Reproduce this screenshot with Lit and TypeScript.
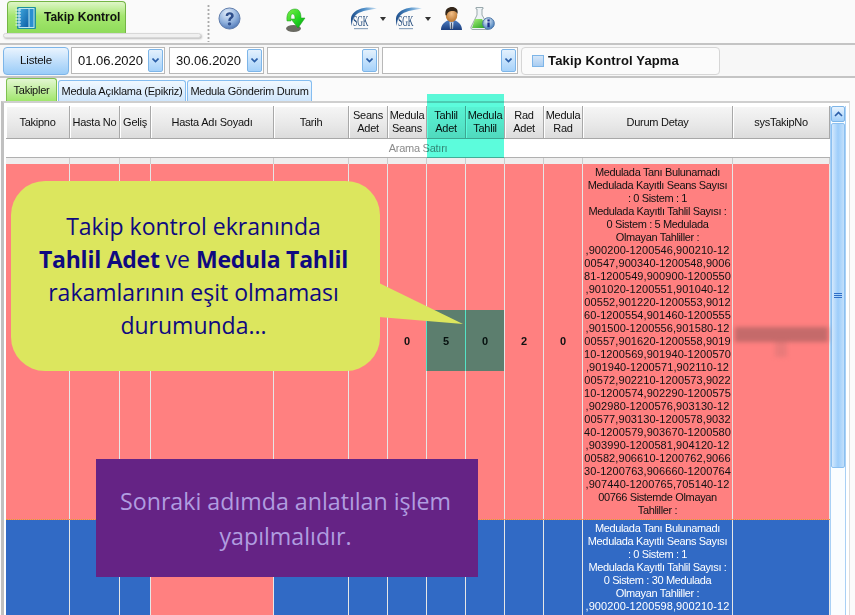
import { LitElement, html, css, svg } from "lit";
import { customElement } from "lit/decorators.js";

const HEAD = [["Takipno"], ["Hasta No"], ["Geliş"], ["Hasta Adı Soyadı"], ["Tarih"], ["Seans", "Adet"], ["Medula", "Seans"], ["Tahlil", "Adet"], ["Medula", "Tahlil"], ["Rad", "Adet"], ["Medula", "Rad"], ["Durum Detay"], ["sysTakipNo"]];
const D1 = ["Medulada Tanı Bulunamadı", "Medulada Kayıtlı Seans Sayısı", ": 0 Sistem : 1", "Medulada Kayıtlı Tahlil Sayısı :", "0 Sistem : 5 Medulada", "Olmayan Tahliller :", ",900200-1200546,900210-12", "00547,900340-1200548,9006", "81-1200549,900900-1200550", ",901020-1200551,901040-12", "00552,901220-1200553,9012", "60-1200554,901460-1200555", ",901500-1200556,901580-12", "00557,901620-1200558,9019", "10-1200569,901940-1200570", ",901940-1200571,902110-12", "00572,902210-1200573,9022", "10-1200574,902290-1200575", ",902980-1200576,903130-12", "00577,903130-1200578,9032", "40-1200579,903670-1200580", ",903990-1200581,904120-12", "00582,906610-1200762,9066", "30-1200763,906660-1200764", ",907440-1200765,705140-12", "00766 Sistemde Olmayan", "Tahliller :"];
const D2 = ["Medulada Tanı Bulunamadı", "Medulada Kayıtlı Seans Sayısı", ": 0 Sistem : 1", "Medulada Kayıtlı Tahlil Sayısı :", "0 Sistem : 30 Medulada", "Olmayan Tahliller :", ",900200-1200598,900210-12"];
const isNums = (l: string) => /^[\d,-]+$/.test(l);

const sgk = () => html`<svg class="ic" width="27" height="23" viewBox="0 0 27 23">
  <defs><linearGradient id="sw" x1="0" y1="0" x2="1" y2="0"><stop offset="0" stop-color="#1f4f8c"/><stop offset=".5" stop-color="#4f8fc8"/><stop offset="1" stop-color="#cfe4f5"/></linearGradient></defs>
  <path d="M27 1.500C18 -.5 6 .5 1.500 9C.5 12 1 16 2 19C2 14 3 10 7 7C12 3.500 20 3 27 1.500Z" fill="url(#sw)"/>
  <text transform="translate(3 19) scale(.56 1)" font-family="Liberation Serif, serif" font-size="14" fill="#1d4679">SGK</text>
  <rect x="4" y="21" width="14" height="1.200" fill="#8fa6bf"/></svg>`;

const help = svg`<defs><radialGradient id="hg" cx="40%" cy="25%" r="85%"><stop offset="0" stop-color="#e4eefa"/><stop offset=".55" stop-color="#8fb0dc"/><stop offset="1" stop-color="#3f69ad"/></radialGradient></defs>
  <circle cx="12" cy="12" r="11" fill="url(#hg)" stroke="#5c79a8"/>
  <path d="M8 9.5C8 6.5 10 5.5 12.2 5.5C14.8 5.5 16.4 7 16.4 9C16.4 11.8 13.2 11.8 13.2 14.5H10.8C10.8 10.8 13.6 10.8 13.6 9.2C13.6 8.2 13 7.7 12.1 7.7C11.1 7.7 10.6 8.4 10.6 9.5Z" fill="#2f4f8c"/>
  <circle cx="12" cy="17.6" r="1.8" fill="#2f4f8c"/>`;

const arrow = svg`<defs><linearGradient id="ag" x1="0" y1="0" x2="1" y2="1"><stop offset="0" stop-color="#7cf04a"/><stop offset=".6" stop-color="#1fd21f"/><stop offset="1" stop-color="#0b9a12"/></linearGradient></defs>
  <ellipse cx="8.500" cy="20.500" rx="7.500" ry="3.500" fill="#6a6a62"/>
  <path d="M2 13C1 5 5 1 10 1C14 1 16 4 16 10H20L13 20 6 11H10C10 7 9 6 7.500 6C6 6 5.500 8 6 13Z" fill="url(#ag)" stroke="#1c9a1c" stroke-width=".5"/>`;

const person = svg`<defs><linearGradient id="pb" x1="0" y1="0" x2="0" y2="1"><stop offset="0" stop-color="#4f7fc4"/><stop offset="1" stop-color="#1c3f7e"/></linearGradient><radialGradient id="pf" cx="50%" cy="40%" r="60%"><stop offset="0" stop-color="#f3c089"/><stop offset="1" stop-color="#b9752f"/></radialGradient></defs>
  <path d="M0 23C0 17 4 15 7.500 13L10.500 15.500 13.500 13C17 15 21 17 21 23Z" fill="url(#pb)"/>
  <path d="M8.500 14.500L10.500 16 12.500 14.500 12 22H9Z" fill="#dfe7f2"/>
  <path d="M10 16H11L11.500 22H9.500Z" fill="#44536a"/>
  <ellipse cx="10.500" cy="8" rx="5.800" ry="7" fill="url(#pf)"/>
  <path d="M4.500 8C3.500 2 7.500 0 11 0C14.500 0 17.500 2 16.500 7C15.500 4.500 13.500 4 11.500 4C8.500 4 6.500 5 5.700 8.500Z" fill="#33261a"/>`;

const flask = svg`<defs><linearGradient id="fg" x1="0" y1="0" x2="1" y2="1"><stop offset="0" stop-color="#a8f07c"/><stop offset="1" stop-color="#1f9e1c"/></linearGradient><radialGradient id="fi" cx="40%" cy="30%" r="75%"><stop offset="0" stop-color="#e9f2fb"/><stop offset="1" stop-color="#3d78b8"/></radialGradient></defs>
  <path d="M6 .5H13V2H12V8L19 20C19.500 21.500 18.500 22.500 17 22.500H3C1.500 22.500 .5 21.500 1 20L7 8V2H6Z" fill="#eef3f5" stroke="#9aa9ad"/>
  <path d="M5 12H12L17 21H2Z" fill="url(#fg)"/>
  <circle cx="18.500" cy="16.500" r="5.800" fill="url(#fi)" stroke="#4a74a6"/>
  <rect x="17.400" y="15.500" width="2.300" height="4.800" fill="#1c2f8c"/><rect x="17.400" y="12.400" width="2.300" height="2.100" fill="#1c2f8c"/>`;

const book = svg`<defs><linearGradient id="bg" x1="0" y1="0" x2="1" y2="1"><stop offset="0" stop-color="#3fa6dc"/><stop offset="1" stop-color="#0d5fa6"/></linearGradient></defs>
  <rect x="2" y="0" width="19" height="22" rx="1" fill="#1f8f9c"/>
  <rect x="3.500" y="1" width="16" height="20" fill="#bfe6ef"/>
  <rect x="4.500" y="2" width="9" height="18" fill="url(#bg)"/>
  <rect x="14.500" y="2" width="4" height="18" fill="#2a8fd0"/>
  <path d="M.5 3H6M.5 6H6M.5 9H6M.5 12H6M.5 15H6M.5 18H6" stroke="#e6f6fb" stroke-width="1.200"/>`;

@customElement("app-root")
export class AppRoot extends LitElement {
  static styles = css`
    :host { display: block; position: relative; width: 855px; height: 615px; overflow: hidden; background: #fbfbfb; font: 11px/13px "Liberation Sans", Arial, sans-serif; color: #111; letter-spacing: -.25px; }
    svg { display: block; }
    .toolbar { height: 43px; display: flex; border-bottom: 2px solid #c4c4c4; box-sizing: content-box; background: #fafafa; }
    .ribbon { width: 198px; margin-left: 3px; display: flex; flex-direction: column; padding-top: 1px; }
    .rtab { width: 119px; height: 32px; margin-left: 4px; box-sizing: border-box; border: 1px solid #74b545; border-bottom: 0; border-radius: 4px 4px 0 0; background: linear-gradient(#dff6c8, #a4e66f 45%, #8fdc5a); display: flex; align-items: center; gap: 8px; padding-left: 7px; font-weight: bold; font-size: 12px; letter-spacing: 0; }
    .pill { height: 5px; border-radius: 3px; background: #f0f0f0; border: 1px solid #d8d8d8; box-shadow: 1px 1px 2px #bbb; box-sizing: border-box; }
    .grip { width: 3px; margin: 4px 0 1px 6px; background: radial-gradient(circle, #aaa 1px, transparent 1.200px) 0 0 / 3px 4px; }
    .icons { display: flex; align-items: flex-start; padding-top: 7px; margin-left: 8px; }
    .ic { flex: none; }
    .caret { width: 0; height: 0; margin: 10px 10px 0 3px; border: 3.500px solid transparent; border-top: 4px solid #333; border-bottom: 0; }
    .filters { height: 31px; display: flex; align-items: center; padding: 0 0 0 3px; border-bottom: 2px solid #c4c4c4; background: #f7f7f7; letter-spacing: 0; }
    .btn { width: 66px; height: 28px; box-sizing: border-box; border: 1px solid #7db5e8; border-radius: 4px; background: linear-gradient(#eaf4fe, #c5e1fb 45%, #9accf8); display: flex; align-items: center; justify-content: center; font-size: 11.500px; letter-spacing: -.2px; }
    .field { height: 27px; box-sizing: border-box; border: 1px solid #b8b8b8; background: #fff; display: flex; align-items: center; justify-content: space-between; padding: 0 1px 0 6px; margin-left: 2px; font-size: 13px; }
    .drop { width: 15px; height: 23px; box-sizing: border-box; border: 1px solid #7db5e8; border-radius: 2px; background: linear-gradient(#e4f1fd, #a6d2fa); display: flex; align-items: center; justify-content: center; }
    .drop svg { width: 7px; height: 5px; }
    .check { width: 199px; height: 28px; box-sizing: border-box; margin-left: 3px; border: 1px solid #d6d6d6; border-radius: 4px; background: #fbfbfb; display: flex; align-items: center; gap: 4px; padding-left: 10px; font-size: 13px; font-weight: bold; letter-spacing: .15px; }
    .box { width: 12px; height: 12px; box-sizing: border-box; border: 1px solid #7db5e8; background: linear-gradient(#d5e6f8, #a9cdf1); }
    .tabs { height: 23px; display: flex; padding-left: 6px; gap: 1px; align-items: flex-end; white-space: nowrap; }
    .tab { height: 21px; box-sizing: border-box; border: 1px solid #85bdf0; border-bottom: 0; border-radius: 3px 3px 0 0; background: linear-gradient(#f0f8ff, #cfe6fc); display: flex; align-items: center; justify-content: center; }
    .tab.on { height: 23px; border-color: #7ec050; background: linear-gradient(#e3f7d2, #a0e66c); }
    .frame { height: 514px; margin-left: 1px; border-left: 3px solid #c0c0c0; border-top: 2px solid #cfcfcf; border-right: 1px solid #ddd; width: 849px; box-sizing: border-box; display: flex; background: #fff; padding: 3px 0 0 2px; }
    .table { width: 824px; flex: none; }
    .row { display: grid; grid-template-columns: 64px 50px 31px 123px 75px 39px 39px 39px 39px 39px 39px 150px 97px; }
    .th { height: 33px; box-sizing: border-box; background: linear-gradient(#f6f6f6, #e8e8e8 60%, #dcdcdc); border-right: 1px solid #a8a8a8; border-bottom: 1px solid #a8a8a8; box-shadow: inset 1px 1px 0 #fff; display: flex; flex-direction: column; align-items: center; justify-content: center; text-align: center; white-space: nowrap; }
    .search { height: 19px; box-sizing: border-box; border-bottom: 1px solid #b0b0b0; text-align: center; color: #8b8b8b; line-height: 18px; background: #fff; }
    .gap { height: 6px; background: #eee; }
    .gap div { border-right: 1px solid #ccc; }
    .td { border-right: 1px solid #e6e6e6; display: flex; align-items: center; justify-content: center; font-weight: bold; min-width: 0; }
    .r1 { height: 356px; box-sizing: border-box; background: #ff8080; border-bottom: 1px dotted #e0a030; }
    .r2 { height: 120px; background: #316ac5; color: #fff; }
    .red { background: #ff8080; }
    .detail { font-weight: normal; flex-direction: column; justify-content: flex-start; padding-top: 2px; text-align: center; white-space: nowrap; box-sizing: border-box; letter-spacing: -.36px; }
    .detail span { display: block; }
    .detail .num { letter-spacing: .08px; }
    .blur { display: flex; flex-direction: column; align-items: center; filter: blur(2px); }
    .blur i { display: block; width: 93px; height: 15px; background: #c56a6a; }
    .blur b { display: block; width: 12px; height: 15px; background: #ea7a7a; }
    .scroll { width: 16px; flex: none; border: 1px solid #a9d0f5; border-width: 0 1px; box-sizing: border-box; background: #fafdff; display: flex; flex-direction: column; }
    .sup { height: 16px; box-sizing: border-box; border: 1px solid #7db5e8; border-radius: 2px; background: linear-gradient(#e8f3fe, #a3d0fa); display: flex; align-items: center; justify-content: center; }
    .thumb { height: 345px; margin-top: 1px; box-sizing: border-box; border: 1px solid #8cc0f0; border-radius: 2px; background: linear-gradient(90deg, #d4e9fd, #9dcdfa 50%, #c3e0fb); display: flex; align-items: center; justify-content: center; }
    .lines { width: 8px; height: 5px; border-top: 1px solid #2f6fc8; border-bottom: 1px solid #2f6fc8; box-sizing: border-box; background: linear-gradient(#2f6fc8,#2f6fc8) 0 50%/100% 1px no-repeat; }
    .mul { position: absolute; mix-blend-mode: multiply; background: #5cfcdc; }
    .m1 { left: 427px; top: 94px; width: 77px; height: 64px; }
    .m2 { left: 426px; top: 310px; width: 78px; height: 61px; }
    .bubble { position: absolute; left: 11px; top: 181px; width: 369px; height: 190px; border-radius: 34px; background: #dce65e; color: #0f0a80; font: 23px/33px "Open Sans", "Noto Sans", sans-serif; letter-spacing: 0; text-align: center; box-sizing: border-box; padding: 29px 4px 0 0; }
    .bubble b { font-weight: 700; letter-spacing: -.25px; }
    .tail { position: absolute; left: 379px; top: 282px; }
    .note { position: absolute; left: 96px; top: 459px; width: 382px; height: 118px; background: #652385; color: #b09de0; font: 23.200px/35px "Open Sans", "Noto Sans", sans-serif; letter-spacing: 0; text-align: center; box-sizing: border-box; padding: 25px 3px 0 0; }
    .f1 { width: 94px; } .f2 { width: 95px; margin-left: 4px; } .f3 { width: 112px; margin-left: 3px; } .f4 { width: 136px; margin-left: 3px; }
    .t1 { width: 51px; } .t2 { width: 128px; } .t3 { width: 125px; }
    .mh { margin-left: 44px; margin-top: 1px; } .ms { margin-left: 44px; } .mf { margin-left: 8px; } .s2 { margin-left: -1px; }
  `;

  private dd() {
    return html`<div class="drop"><svg viewBox="0 0 7 5"><path d="M.5 .5L3.500 3.500 6.500 .5" fill="none" stroke="#2a5ea8" stroke-width="1.600"/></svg></div>`;
  }

  private lines(list: string[]) {
    return list.map((l) => html`<span class=${isNums(l) ? "num" : ""}>${l}</span>`);
  }

  render() {
    return html`
      <div class="toolbar">
        <div class="ribbon">
          <div class="rtab"><svg class="ic" width="21" height="22" viewBox="0 0 21 22">${book}</svg>Takip Kontrol</div>
          <div class="pill"></div>
        </div>
        <div class="grip"></div>
        <div class="icons">
          <svg class="ic" width="23" height="23" viewBox="0 0 24 24">${help}</svg>
          <svg class="ic mh" width="21" height="25" viewBox="0 0 21 25">${arrow}</svg>
          <div class="ms"></div>
          ${sgk()}<div class="caret"></div><div class="s2"></div>${sgk()}<div class="caret"></div>
          <svg class="ic" width="21" height="23" viewBox="0 0 21 23">${person}</svg>
          <svg class="ic mf" width="25" height="24" viewBox="0 0 25 24">${flask}</svg>
        </div>
      </div>
      <div class="filters">
        <div class="btn">Listele</div>
        <div class="field f1">01.06.2020${this.dd()}</div>
        <div class="field f2">30.06.2020${this.dd()}</div>
        <div class="field f3"><span></span>${this.dd()}</div>
        <div class="field f4"><span></span>${this.dd()}</div>
        <div class="check"><span class="box"></span>Takip Kontrol Yapma</div>
      </div>
      <div class="tabs">
        <div class="tab on t1">Takipler</div>
        <div class="tab t2">Medula Açıklama (Epikriz)</div>
        <div class="tab t3">Medula Gönderim Durum</div>
      </div>
      <div class="frame">
        <div class="table">
          <div class="row">${HEAD.map((h) => html`<div class="th">${h.map((t) => html`<span>${t}</span>`)}</div>`)}</div>
          <div class="search">Arama Satırı</div>
          <div class="row gap">${HEAD.map(() => html`<div></div>`)}</div>
          <div class="row r1">
            ${Array.from({ length: 6 }, () => html`<div class="td"></div>`)}
            ${["0", "5", "0", "2", "0"].map((v) => html`<div class="td">${v}</div>`)}
            <div class="td detail">${this.lines(D1)}</div>
            <div class="td"><div class="blur"><i></i><b></b></div></div>
          </div>
          <div class="row r2">
            ${Array.from({ length: 11 }, (_, i) => html`<div class="td ${i === 3 ? "red" : ""}"></div>`)}
            <div class="td detail">${this.lines(D2)}</div>
            <div class="td"></div>
          </div>
        </div>
        <div class="scroll">
          <div class="sup"><svg width="9" height="6" viewBox="0 0 9 6"><path d="M1 5L4.500 1.500 8 5" fill="none" stroke="#2a5ea8" stroke-width="1.600"/></svg></div>
          <div class="thumb"><div class="lines"></div></div>
        </div>
      </div>
      <div class="mul m1"></div>
      <div class="mul m2"></div>
      <svg class="tail" width="86" height="46" viewBox="0 0 86 46"><path d="M0 1L84 42 0 35Z" fill="#dce65e"/></svg>
      <div class="bubble">Takip kontrol ekranında<br /><b>Tahlil Adet</b> ve <b>Medula Tahlil</b><br />rakamlarının eşit olmaması<br />durumunda...</div>
      <div class="note">Sonraki adımda anlatılan işlem<br />yapılmalıdır.</div>
    `;
  }
}
